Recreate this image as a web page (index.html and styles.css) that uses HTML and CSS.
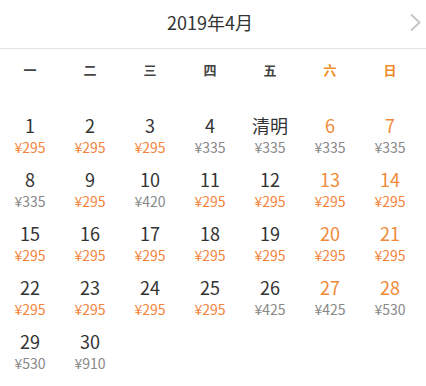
FILE: index.html
```html
<!DOCTYPE html>
<html lang="zh-CN">
<head>
<meta charset="utf-8">
<title>2019年4月</title>
<link rel="stylesheet" href="styles.css">
</head>
<body>
<div class="cal">
  <div class="head">
    <span class="title">2019年4月</span>
    <svg class="next" width="13" height="19" viewBox="0 0 13 19"><path d="M2 1.5 L10.5 9.5 L2 17.5" fill="none" stroke="#c6c6c6" stroke-width="2"/></svg>
  </div>
  <div class="week">
    <span>一</span><span>二</span><span>三</span><span>四</span><span>五</span><span class="we">六</span><span class="we">日</span>
  </div>
  <div class="grid">
    <div class="cell"><span class="d">1</span><span class="p hot">¥295</span></div>
    <div class="cell"><span class="d">2</span><span class="p hot">¥295</span></div>
    <div class="cell"><span class="d">3</span><span class="p hot">¥295</span></div>
    <div class="cell"><span class="d">4</span><span class="p">¥335</span></div>
    <div class="cell"><span class="d">清明</span><span class="p">¥335</span></div>
    <div class="cell"><span class="d we">6</span><span class="p">¥335</span></div>
    <div class="cell"><span class="d we">7</span><span class="p">¥335</span></div>

    <div class="cell"><span class="d">8</span><span class="p">¥335</span></div>
    <div class="cell"><span class="d">9</span><span class="p hot">¥295</span></div>
    <div class="cell"><span class="d">10</span><span class="p">¥420</span></div>
    <div class="cell"><span class="d">11</span><span class="p hot">¥295</span></div>
    <div class="cell"><span class="d">12</span><span class="p hot">¥295</span></div>
    <div class="cell"><span class="d we">13</span><span class="p hot">¥295</span></div>
    <div class="cell"><span class="d we">14</span><span class="p hot">¥295</span></div>

    <div class="cell"><span class="d">15</span><span class="p hot">¥295</span></div>
    <div class="cell"><span class="d">16</span><span class="p hot">¥295</span></div>
    <div class="cell"><span class="d">17</span><span class="p hot">¥295</span></div>
    <div class="cell"><span class="d">18</span><span class="p hot">¥295</span></div>
    <div class="cell"><span class="d">19</span><span class="p hot">¥295</span></div>
    <div class="cell"><span class="d we">20</span><span class="p hot">¥295</span></div>
    <div class="cell"><span class="d we">21</span><span class="p hot">¥295</span></div>

    <div class="cell"><span class="d">22</span><span class="p hot">¥295</span></div>
    <div class="cell"><span class="d">23</span><span class="p hot">¥295</span></div>
    <div class="cell"><span class="d">24</span><span class="p hot">¥295</span></div>
    <div class="cell"><span class="d">25</span><span class="p hot">¥295</span></div>
    <div class="cell"><span class="d">26</span><span class="p">¥425</span></div>
    <div class="cell"><span class="d we">27</span><span class="p">¥425</span></div>
    <div class="cell"><span class="d we">28</span><span class="p">¥530</span></div>

    <div class="cell"><span class="d">29</span><span class="p">¥530</span></div>
    <div class="cell"><span class="d">30</span><span class="p">¥910</span></div>
  </div>
</div>
</body>
</html>
```
FILE: styles.css
```css
html, body {
  margin: 0;
  padding: 0;
  background: #fff;
}
body {
  width: 426px;
  height: 386px;
  overflow: hidden;
  font-family: "Noto Sans CJK SC", "Noto Sans", sans-serif;
  color: #333;
}
.cal {
  width: 426px;
}
.head {
  position: relative;
  height: 48px;
  width: 426px;
  border-bottom: 1px solid #e2e2e2;
}
.title {
  display: block;
  width: 420px;
  text-align: center;
  font-size: 18px;
  line-height: 44px;
  color: #333;
}
.next {
  position: absolute;
  left: 409px;
  top: 13px;
}
.week {
  display: grid;
  grid-template-columns: repeat(7, 60px);
  height: 40px;
  align-items: center;
  text-align: center;
  font-size: 13px;
  font-weight: bold;
  color: #444;
}
.week .we {
  color: #f08a24;
}
.grid {
  display: grid;
  grid-template-columns: repeat(7, 60px);
  grid-auto-rows: 54px;
  padding-top: 18px;
}
.cell {
  display: flex;
  flex-direction: column;
  align-items: center;
  padding-top: 6px;
}
.d {
  font-size: 18px;
  line-height: 25px;
  color: #333;
}
.d.we {
  color: #f08a38;
}
.p {
  font-size: 14px;
  line-height: 19px;
  color: #888;
}
.p.hot {
  color: #f3843c;
}
```
